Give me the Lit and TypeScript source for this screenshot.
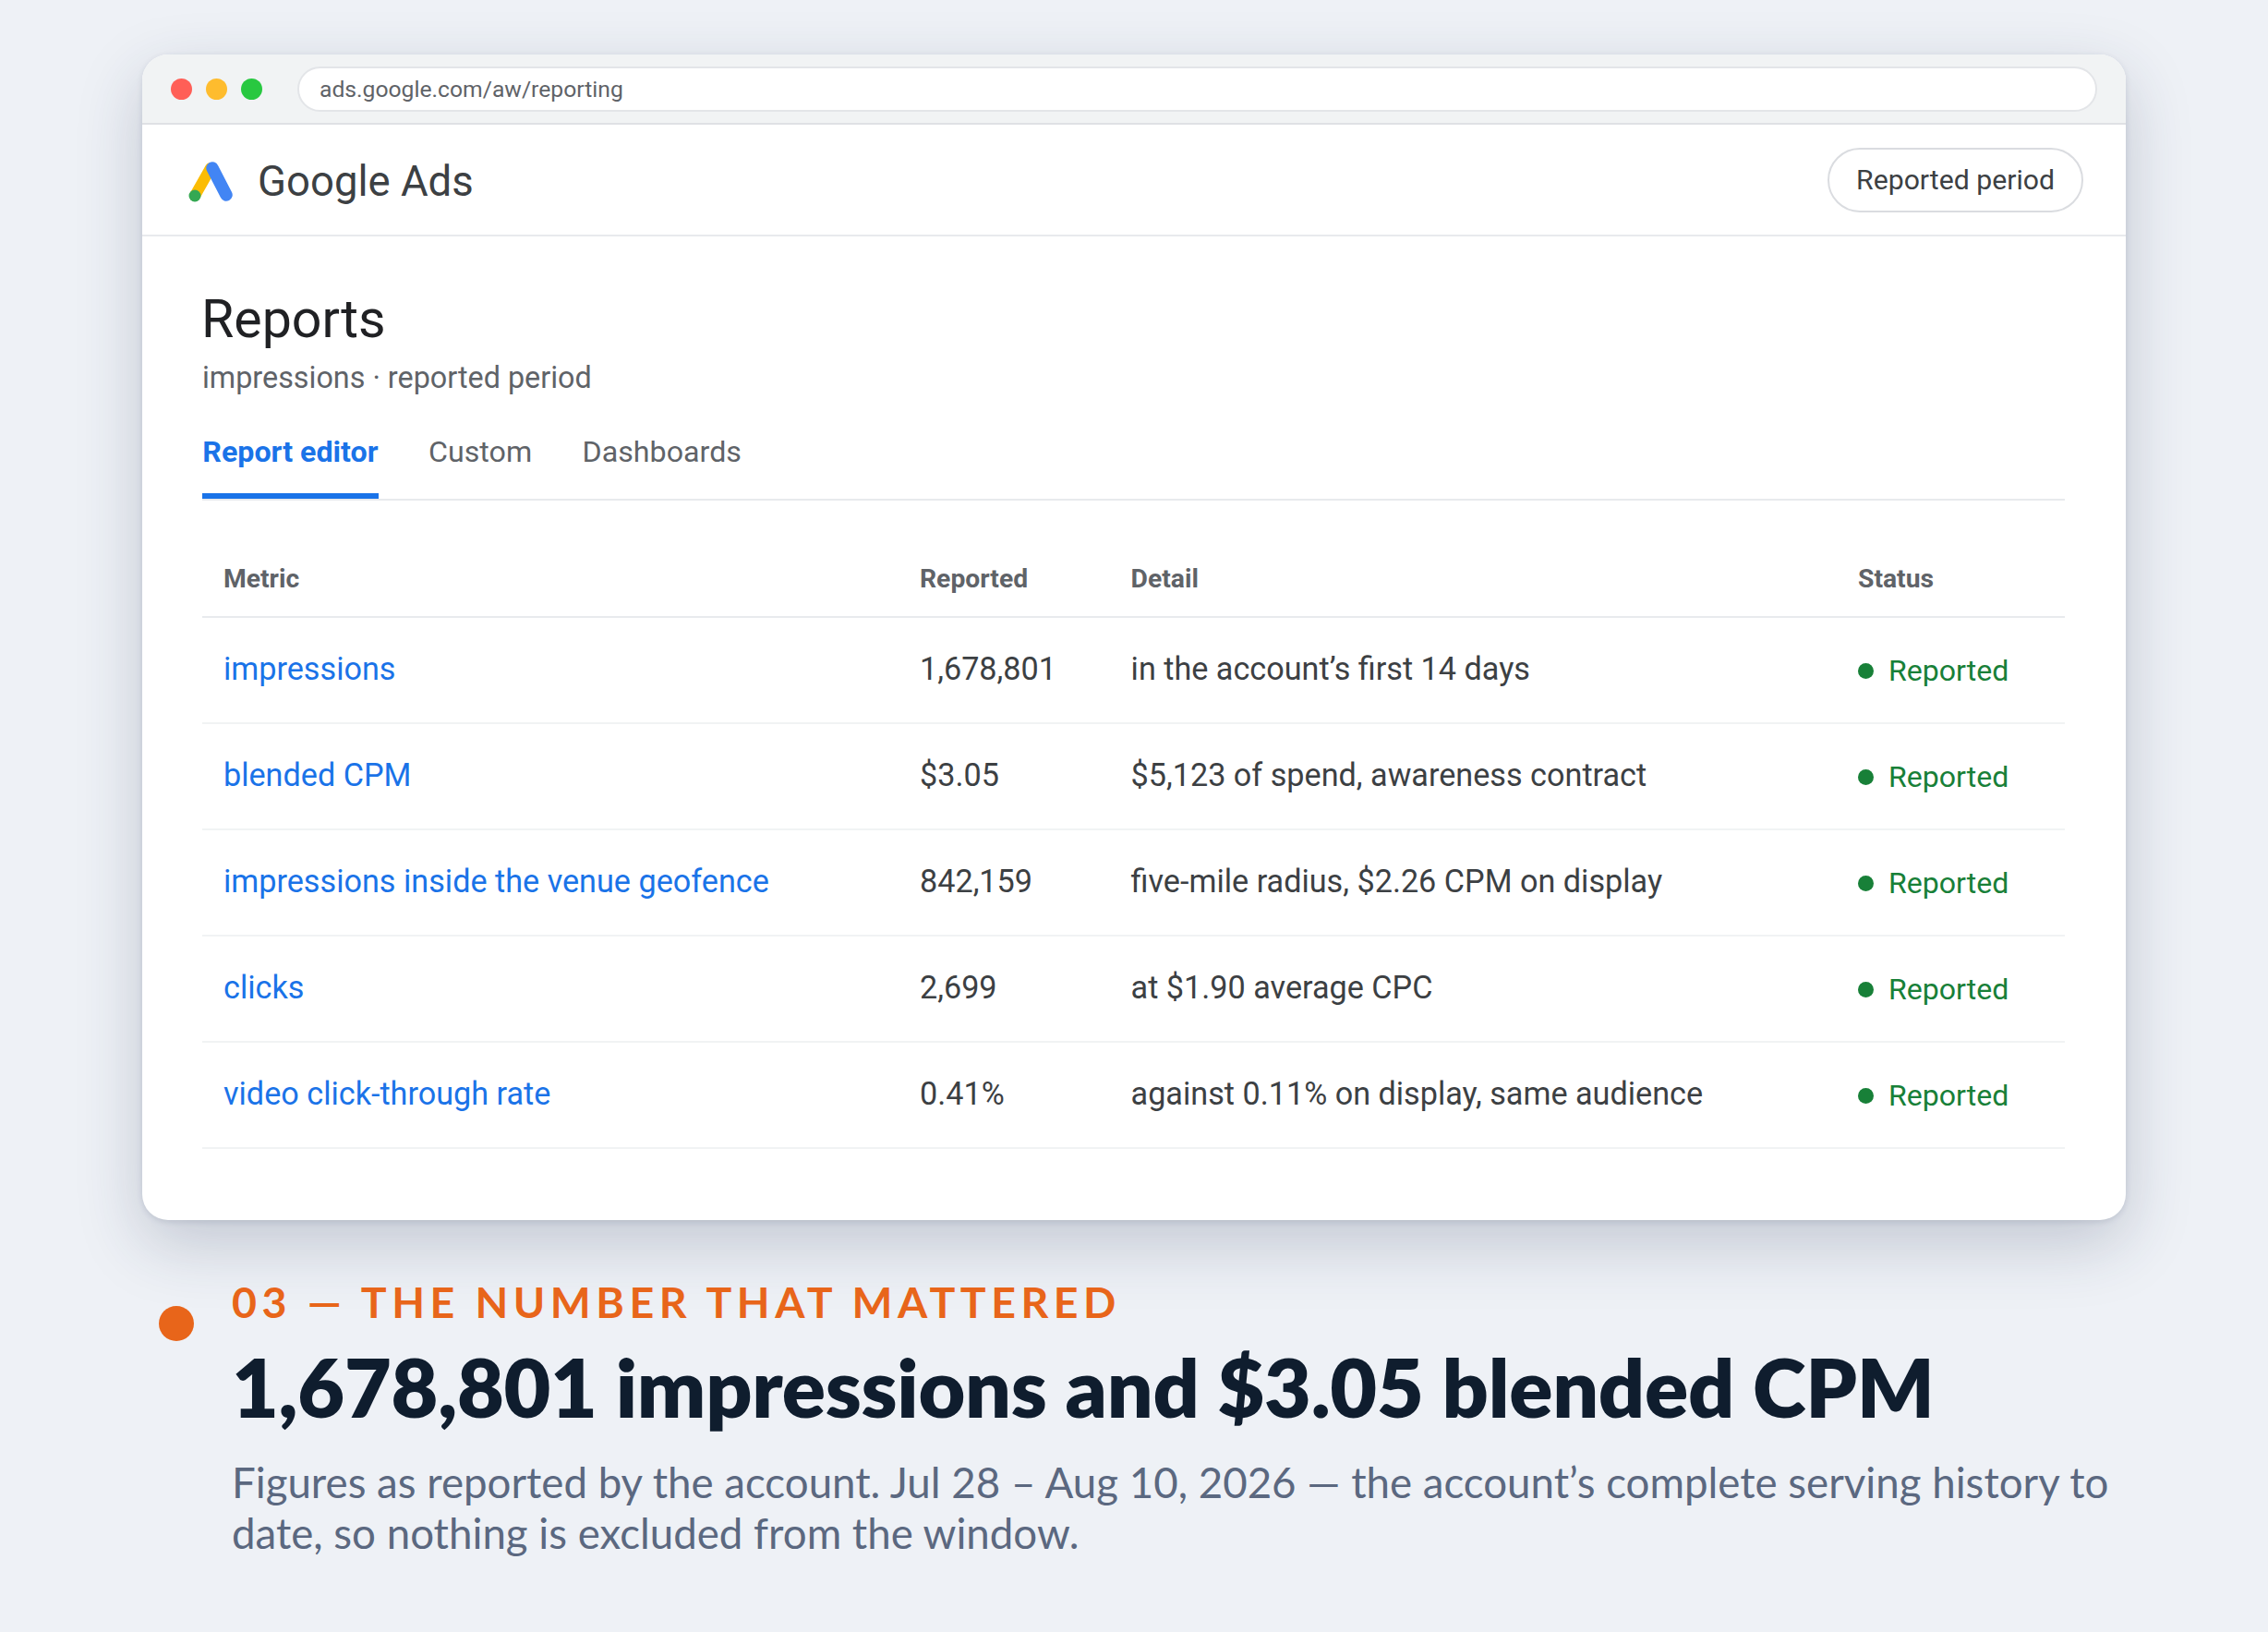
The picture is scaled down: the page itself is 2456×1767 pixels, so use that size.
import { LitElement, html, css } from "lit";
import { customElement } from "lit/decorators.js";

const rows = [
  ["impressions", "1,678,801", "in the account’s first 14 days"],
  ["blended CPM", "$3.05", "$5,123 of spend, awareness contract"],
  ["impressions inside the venue geofence", "842,159", "five-mile radius, $2.26 CPM on display"],
  ["clicks", "2,699", "at $1.90 average CPC"],
  ["video click-through rate", "0.41%", "against 0.11% on display, same audience"],
];

@customElement("app-root")
export class AppRoot extends LitElement {
  static styles = css`
    :host { display: block; width: 2456px; height: 1767px; background: #eef1f6; overflow: hidden; font-family: Roboto, sans-serif; }
    .page { padding: 59px 154px 0; display: flex; flex-direction: column; }
    .card { height: 1262px; box-sizing: border-box; background: #fff; border-radius: 28px; box-shadow: 0 25px 70px rgba(35,48,80,.22), 0 2px 6px rgba(35,48,80,.12); overflow: hidden; display: flex; flex-direction: column; }
    .chrome { height: 76px; box-sizing: border-box; flex: none; background: #f1f3f4; border-bottom: 2px solid #dfe1e5; display: flex; align-items: center; padding: 0 31px; }
    .dots { display: flex; gap: 15px; margin-right: 38px; }
    .dot { width: 23px; height: 23px; border-radius: 50%; }
    .r { background: #ff5f57; } .y { background: #febc2e; } .g { background: #28c840; }
    .url { flex: 1; height: 49px; box-sizing: border-box; background: #fff; border: 2px solid #e3e5e8; border-radius: 25px; display: flex; align-items: center; padding: 0 22px; font-size: 24.7px; color: #5f6368; }
    .head { height: 121px; box-sizing: border-box; flex: none; border-bottom: 2px solid #e8eaed; display: flex; align-items: center; justify-content: space-between; padding: 0 46px 0 50px; }
    .brand { display: flex; align-items: center; gap: 25px; font-size: 45.5px; color: #3c4043; padding-top: 4px; }
    .brand svg { display: block; width: 50px; height: 45px; }
    .btn { height: 70px; box-sizing: border-box; border: 2px solid #dadce0; border-radius: 35px; padding: 0 29px; display: flex; align-items: center; font-size: 30.2px; color: #3c4043; background: #fff; }
    .body { padding: 0 66px 0 65.3px; }
    h1 { margin: 0 0 0 -1.3px; padding-top: 55px; font-weight: 400; font-size: 57.3px; line-height: 70px; color: #202124; }
    .sub { font-size: 32.35px; line-height: 44px; color: #5f6368; margin-top: 6px; margin-left: -0.3px; }
    .tabs { display: flex; gap: 54.5px; border-bottom: 2px solid #e8eaed; margin-top: 26px; height: 83px; }
    .tab { font-size: 32.2px; color: #5f6368; line-height: 44px; padding-top: 10px; height: 73px; }
    .tab.on { color: #1a73e8; font-weight: 700; border-bottom: 6px solid #1a73e8; height: 67px; }
    .row { display: grid; grid-template-columns: 754.7px 228.6px 787.4px 1fr; align-items: center; border-bottom: 2px solid #f1f3f4; height: 115.1px; box-sizing: border-box; }
    .row > div { padding: 0 22px; }
    .row > div:first-child { padding-left: 22.7px; }
    .row.th { height: 127px; padding-top: 44px; border-bottom: 2px solid #e8eaed; font-size: 28.3px; font-weight: 700; color: #5f6368; }
    .row > .cell { font-size: 34.2px; color: #3c4043; padding-bottom: 4px; }
    .row > .link { color: #1a73e8; }
    .row > .status { font-size: 32.1px; color: #188038; display: flex; align-items: center; gap: 16px; padding-top: 0; }
    .status i { width: 17px; height: 17px; border-radius: 50%; background: #188038; display: block; position: relative; top: 1px; }
    .cap { position: relative; padding-left: 97px; margin-top: 60px; font-family: Lato, sans-serif; }
    .bullet { position: absolute; left: 17.5px; top: 33px; width: 38px; height: 38px; border-radius: 50%; background: #e8651a; }
    .kick { font-size: 46.5px; font-weight: 700; letter-spacing: 5.5px; line-height: 56px; color: #e8651a; white-space: nowrap; }
    h2 { margin: 0; font-size: 87.7px; font-weight: 800; letter-spacing: -0.27px; line-height: 104px; color: #0f1d2e; white-space: nowrap; margin-top: 12px; }
    .desc { font-size: 45.65px; line-height: 55px; color: #5b6880; margin-top: 23.5px; }
  `;
  render() {
    return html`<div class="page">
      <div class="card">
        <div class="chrome">
          <div class="dots"><div class="dot r"></div><div class="dot y"></div><div class="dot g"></div></div>
          <div class="url">ads.google.com/aw/reporting</div>
        </div>
        <div class="head">
          <div class="brand">
            <svg viewBox="0 0 50 45" aria-hidden="true">
              <path d="M24 8 7 38" stroke="#fbbc04" stroke-width="12" stroke-linecap="round" fill="none"/>
              <path d="M26 8 41 37" stroke="#4285f4" stroke-width="13.5" stroke-linecap="round" fill="none"/>
              <circle cx="7" cy="38" r="6.5" fill="#34a853"/>
            </svg>
            <span>Google Ads</span>
          </div>
          <div class="btn">Reported period</div>
        </div>
        <div class="body">
          <h1>Reports</h1>
          <div class="sub">impressions · reported period</div>
          <div class="tabs">
            <div class="tab on">Report editor</div>
            <div class="tab">Custom</div>
            <div class="tab">Dashboards</div>
          </div>
          <div class="table">
            <div class="row th"><div>Metric</div><div>Reported</div><div>Detail</div><div>Status</div></div>
            ${rows.map(
              (r) => html`<div class="row">
                <div class="cell link">${r[0]}</div>
                <div class="cell">${r[1]}</div>
                <div class="cell">${r[2]}</div>
                <div class="status"><i></i>Reported</div>
              </div>`
            )}
          </div>
        </div>
      </div>
      <div class="cap">
        <div class="bullet"></div>
        <div class="kick">03 — THE NUMBER THAT MATTERED</div>
        <h2>1,678,801 impressions and $3.05 blended CPM</h2>
        <div class="desc">Figures as reported by the account. Jul 28 – Aug 10, 2026 — the account’s complete serving history to date, so nothing is excluded from the window.</div>
      </div>
    </div>`;
  }
}
